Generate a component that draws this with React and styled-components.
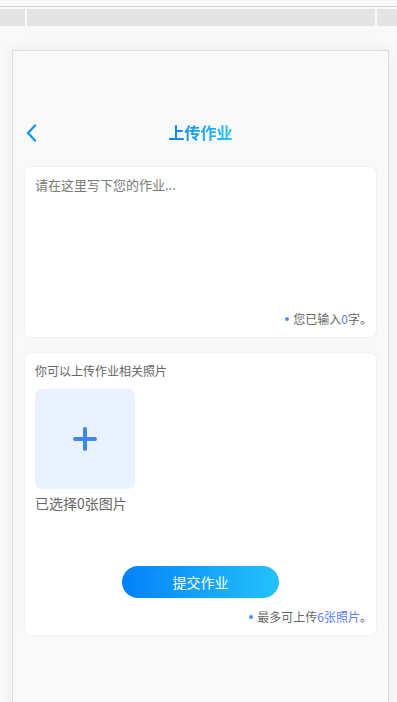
import React from "react";
import styled, { createGlobalStyle } from "styled-components";

const GlobalStyle = createGlobalStyle`
  html, body {
    margin: 0;
    padding: 0;
    background: #f9f9f9;
    font-family: "Noto Sans CJK SC", "Liberation Sans", sans-serif;
    overflow: hidden;
  }
`;

export default function App() {
  return (
    <Page>
      <GlobalStyle />
      <TopLine />
      <Toolbar>
        <Segment $w="25px" />
        <Segment $grow />
        <Segment $w="20px" />
      </Toolbar>
      <Frame>
        <Nav>
          <Back>
            <svg width="14" height="18" viewBox="0 0 14 18">
              <path d="M10 1.5 L3 9 L10 16.5" fill="none" stroke="#1a95f3" strokeWidth="2.4" strokeLinecap="round" strokeLinejoin="round" />
            </svg>
          </Back>
          <Title>上传作业</Title>
        </Nav>

        <Card $h="170px">
          <Placeholder>请在这里写下您的作业...</Placeholder>
          <Note>
            <Dot />您已输入<Blue>0</Blue>字。
          </Note>
        </Card>

        <Card $h="282px">
          <Label>你可以上传作业相关照片</Label>
          <Upload>
            <svg width="24" height="24" viewBox="0 0 24 24">
              <path d="M12 2 V22 M2 12 H22" stroke="#3f86f5" strokeWidth="4" strokeLinecap="round" />
            </svg>
          </Upload>
          <Caption>已选择0张图片</Caption>
          <ButtonRow>
            <Submit>提交作业</Submit>
          </ButtonRow>
          <Note>
            <Dot />最多可上传<Blue>6张照片</Blue>。
          </Note>
        </Card>
      </Frame>
    </Page>
  );
}

const Page = styled.div`
  height: 702px;
  padding-top: 6px;
  box-sizing: border-box;
  overflow: hidden;
`;

const TopLine = styled.div`
  height: 1px;
  background: #cfcfcf;
`;

const Toolbar = styled.div`
  display: flex;
  gap: 2px;
  margin-top: 2px;
  height: 17px;
`;

const Segment = styled.div`
  background: #e4e4e4;
  width: ${(p) => p.$w || "auto"};
  flex: ${(p) => (p.$grow ? 1 : "none")};
`;

const Frame = styled.div`
  margin: 24px 8px 0 12px;
  height: 700px;
  border: 1px solid #dedede;
  background: #f9f9f9;
  box-shadow: 0 0 14px rgba(0, 0, 0, 0.06);
  padding: 63px 12px 0;
  display: flex;
  flex-direction: column;
  gap: 16px;
`;

const Nav = styled.div`
  position: relative;
  height: 37px;
  display: flex;
  align-items: center;
  justify-content: center;
`;

const Back = styled.div`
  position: absolute;
  left: 0;
  top: 10px;
  display: flex;
`;

const Title = styled.div`
  font-size: 16px;
  font-weight: 700;
  margin-top: -2px;
  background: linear-gradient(90deg, #0a80f5, #25c4fb);
  -webkit-background-clip: text;
  background-clip: text;
  color: transparent;
`;

const Card = styled.div`
  height: ${(p) => p.$h};
  flex: none;
  box-sizing: border-box;
  background: #fff;
  border-radius: 6px;
  box-shadow: 0 0 3px rgba(0, 0, 0, 0.08);
  padding: 9px 10px 10px;
  display: flex;
  flex-direction: column;
`;

const Placeholder = styled.div`
  font-size: 13px;
  line-height: 18px;
  color: #7a7a7a;
  flex: 1;
`;

const Note = styled.div`
  display: flex;
  align-items: center;
  justify-content: flex-end;
  font-size: 12px;
  line-height: 16px;
  color: #666;
  margin-right: -6px;
`;

const Dot = styled.span`
  width: 4px;
  height: 4px;
  border-radius: 50%;
  background: #4b8ef5;
  margin-right: 4px;
`;

const Blue = styled.span`
  color: #5a7cf7;
`;

const Label = styled.div`
  font-size: 12px;
  line-height: 18px;
  color: #666;
`;

const Upload = styled.div`
  margin-top: 9px;
  width: 100px;
  height: 100px;
  border-radius: 7px;
  background: #ebf2ff;
  display: flex;
  align-items: center;
  justify-content: center;
`;

const Caption = styled.div`
  margin-top: 3px;
  font-size: 14px;
  line-height: 22px;
  color: #666;
`;

const ButtonRow = styled.div`
  flex: 1;
  display: flex;
  align-items: flex-end;
  justify-content: center;
  padding-bottom: 11px;
`;

const Submit = styled.button`
  width: 157px;
  height: 32px;
  border: none;
  border-radius: 16px;
  background: linear-gradient(90deg, #0481fa, #24c2fb);
  color: #fff;
  font-family: inherit;
  font-size: 14px;
`;
